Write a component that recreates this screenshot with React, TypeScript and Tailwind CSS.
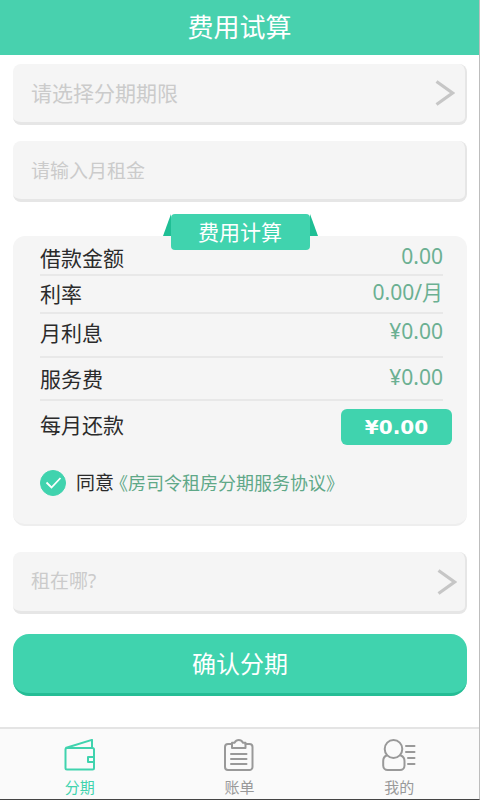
import React, { useState } from 'react';
import clsx from 'clsx';

interface IconProps {
  className?: string;
}

const ArrowIcon: React.FC<IconProps> = ({ className }) => (
  <svg viewBox="0 0 20 26" fill="none" stroke="#c6c6c6" strokeWidth="3.2" className={className} aria-hidden="true">
    <path d="M1.5 1.5 17.5 13 1.5 24.5" strokeLinejoin="miter" />
  </svg>
);

const WalletIcon: React.FC<IconProps> = ({ className }) => (
  <svg viewBox="0 0 34 34" fill="none" stroke="currentColor" strokeWidth="2" strokeLinejoin="round" className={className} aria-hidden="true">
    <rect x="2.5" y="9" width="28.5" height="21.5" rx="1.5" />
    <path d="M2.5 9 29 0.9V9" />
    <path d="M31 18h-6v5h6" />
  </svg>
);

const BillIcon: React.FC<IconProps> = ({ className }) => (
  <svg viewBox="0 0 34 34" fill="none" stroke="currentColor" strokeWidth="2" strokeLinejoin="round" strokeLinecap="round" className={className} aria-hidden="true">
    <path d="M10 5H6A3 3 0 0 0 3 8V28A3 3 0 0 0 6 31H27.5A3 3 0 0 0 30.5 28V8A3 3 0 0 0 27.5 5H23.5" />
    <path d="M10 9V3.8H12.5C13.5 2 14.5 1 16.8 1S20 2 21 3.8H23.5V9Z" />
    <path d="M9 15H24.5M9 20H24.5M9 25H24.5" />
  </svg>
);

const MineIcon: React.FC<IconProps> = ({ className }) => (
  <svg viewBox="0 0 34 34" fill="none" stroke="currentColor" strokeWidth="2" strokeLinecap="round" className={className} aria-hidden="true">
    <ellipse cx="11.5" cy="10" rx="8.8" ry="9" />
    <path d="M4.5 16.5C2.2 17.5 1.2 19.5 1.2 22V26.5A4.5 4.5 0 0 0 5.7 31H18A4.5 4.5 0 0 0 22.5 26.5V22C22.5 19.5 21.3 17.5 18.8 16.5" />
    <path d="M24 7H32.5M24 13H32.5M26 19H32.5M26 25H32.5" />
  </svg>
);

const FEES = [
  { label: '借款金额', value: '0.00', row: 'h-10 pt-1.5' },
  { label: '利率', value: '0.00/月', row: 'h-[38px]' },
  { label: '月利息', value: '¥0.00', row: 'h-11 pb-1' },
  { label: '服务费', value: '¥0.00', row: 'h-[43px]' },
];

const TABS = [
  { id: 'stage', name: '分期', icon: WalletIcon },
  { id: 'bill', name: '账单', icon: BillIcon },
  { id: 'mine', name: '我的', icon: MineIcon },
];

const fieldBox = 'relative flex items-center rounded-lg bg-[#f5f5f5] border-b-3 border-r-2 border-[#e6e6e6]';

const App: React.FC = () => {
  const [term, setTerm] = useState('');
  const [rent, setRent] = useState('');
  const [agreed, setAgreed] = useState(true);
  const [tab, setTab] = useState('stage');

  return (
    <div className="flex min-h-screen flex-col border-r border-b border-r-[#bdbdbd] border-b-[#444] bg-white font-['Noto_Sans','Noto_Sans_CJK_SC',sans-serif]">
      <header className="flex h-[55px] items-center justify-center bg-[#48d1ae] pb-0.5">
        <h1 className="text-[26px] leading-8 text-white">费用试算</h1>
      </header>

      <form className="flex flex-col pt-[9px] pr-3 pl-[13px]" onSubmit={(e) => e.preventDefault()}>
        <div className={fieldBox}>
          <select
            aria-label="分期期限"
            value={term}
            onChange={(e) => setTerm(e.target.value)}
            className="h-[58px] w-full appearance-none bg-transparent pt-0.5 pl-[18px] text-[21px] text-[#cbcbcb] outline-none"
          >
            <option value="">请选择分期期限</option>
            <option value="6">6</option>
            <option value="12">12</option>
          </select>
          <ArrowIcon className="pointer-events-none absolute right-2.5 h-[26px] w-5" />
        </div>

        <div className={clsx(fieldBox, 'mt-4')}>
          <input
            type="text"
            inputMode="decimal"
            aria-label="月租金"
            placeholder="请输入月租金"
            value={rent}
            onChange={(e) => setRent(e.target.value)}
            className="h-[58px] w-full bg-transparent pt-0.5 pl-[18px] text-[19px] text-[#555] outline-none placeholder:text-[#cbcbcb]"
          />
        </div>

        <section className="relative mt-[34px] h-[290px] rounded-xl border-b-2 border-[#eee] bg-[#f5f5f5] px-[27px]">
          {/* ribbon title, folds over the top edge of the panel */}
          <div className="absolute inset-x-0 -top-[22px] flex justify-center">
            <svg viewBox="0 0 8 22" className="h-[22px] w-2" aria-hidden="true">
              <path d="M8 0V22H0Z" fill="#1fbf95" />
            </svg>
            <h2 className="flex h-9 w-[139px] items-center justify-center rounded-sm bg-[#40d3ae] text-[21px] leading-7 text-white">
              费用计算
            </h2>
            <svg viewBox="0 0 8 22" className="h-[22px] w-2" aria-hidden="true">
              <path d="M0 0V22H8Z" fill="#1fbf95" />
            </svg>
          </div>

          <dl className="text-[21px] leading-7">
            {FEES.map((fee) => (
              <div
                key={fee.label}
                className={clsx('-mr-[3px] flex items-center justify-between border-b-2 border-[#e8e8e8]', fee.row)}
              >
                <dt className="text-[#2b2b2b]">{fee.label}</dt>
                <dd className="pb-1 text-[#6bb092]">{fee.value}</dd>
              </div>
            ))}
            <div className="-mr-3 flex h-[52px] items-center justify-between">
              <dt className="pb-1 text-[#2b2b2b]">每月还款</dt>
              <dd className="flex h-9 w-[111px] items-center justify-center rounded-md bg-[#40d3ae] font-['DejaVu_Sans',sans-serif] text-xl font-bold text-white">
                ¥0.00
              </dd>
            </div>
          </dl>

          <div className="mt-4 flex items-center">
            <span className="relative flex h-[26px] w-[26px]">
              <input
                id="agree"
                type="checkbox"
                checked={agreed}
                onChange={(e) => setAgreed(e.target.checked)}
                className="h-full w-full appearance-none rounded-full border border-[#40d3ae] checked:bg-[#40d3ae]"
              />
              {agreed && (
                <svg viewBox="0 0 26 26" fill="none" stroke="#fff" strokeWidth="1.8" className="pointer-events-none absolute inset-0" aria-hidden="true">
                  <path d="M6.5 12.5 11.5 17.5 20.5 8" />
                </svg>
              )}
            </span>
            <label htmlFor="agree" className="ml-2.5 text-[19px] leading-7 text-[#2b2b2b]">
              同意
            </label>
            <a href="#agreement" className="-ml-1 text-lg leading-7 text-[#5fa888]">
              《房司令租房分期服务协议》
            </a>
          </div>
        </section>

        <button type="button" className={clsx(fieldBox, 'mt-[26px] h-[62px] pl-[18px] text-left text-[19px] text-[#cbcbcb]')}>
          租在哪?
          <ArrowIcon className="absolute right-2 h-[26px] w-5" />
        </button>

        <button
          type="submit"
          className="mt-5 h-[62px] rounded-2xl border-b-3 border-[#25bd95] bg-[#40d3ae] text-2xl text-white"
        >
          确认分期
        </button>
      </form>

      <nav className="mt-auto grid h-[72px] grid-cols-3 border-t-2 border-[#e4e4e4] bg-[#fafafa]">
        {TABS.map(({ id, name, icon: Icon }) => (
          <button
            key={id}
            type="button"
            onClick={() => setTab(id)}
            className={clsx(
              'flex flex-col items-center pt-2.5 text-[15px] leading-5',
              tab === id ? 'text-[#40d3ae]' : 'text-[#999]'
            )}
          >
            <Icon className="h-[34px] w-[34px]" />
            <span className="mt-1">{name}</span>
          </button>
        ))}
      </nav>
    </div>
  );
};

export default App;
